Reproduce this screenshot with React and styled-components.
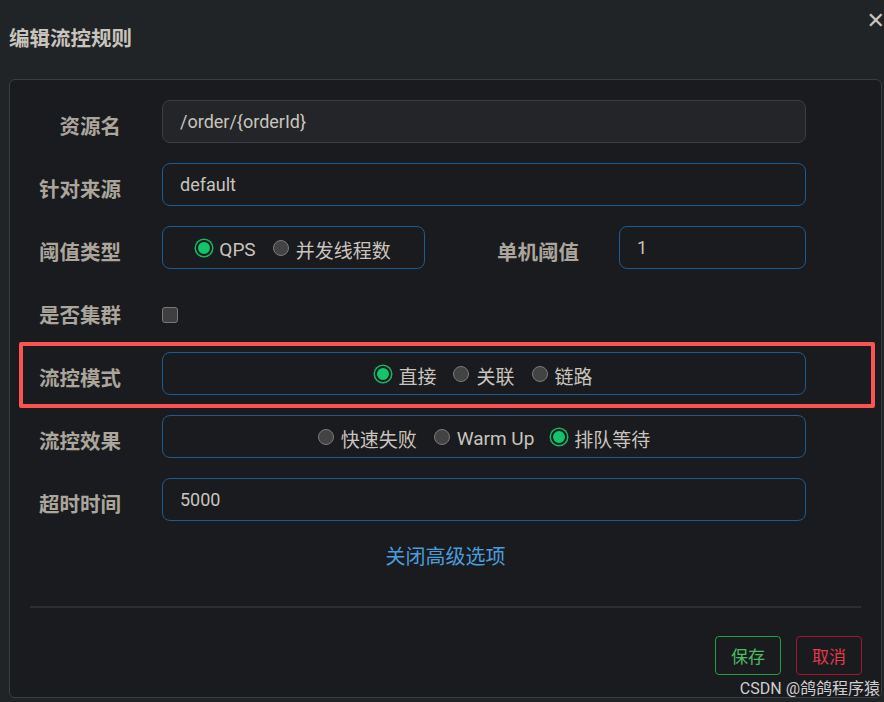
import React from 'react'
import styled, { createGlobalStyle } from 'styled-components'

const GlobalStyle = createGlobalStyle`
  html, body {
    margin: 0;
    padding: 0;
    background: #212427;
  }
  body {
    font-family: Roboto, "Noto Sans CJK SC", sans-serif;
  }
`

const Page = styled.div`
  position: relative;
  width: 884px;
  height: 702px;
  overflow: hidden;
  background: #212427;
`

const Header = styled.div`
  display: flex;
  justify-content: space-between;
  align-items: flex-start;
  height: 79px;
  padding-left: 9px;
  box-sizing: border-box;
`

const Title = styled.h4`
  margin: 24px 0 0;
  font-family: "Noto Sans CJK SC", sans-serif;
  font-size: 20.5px;
  line-height: 26px;
  font-weight: 700;
  color: #c9c4bd;
`

const Close = styled.span`
  margin: 9px -1px 0 0;
  font-family: "DejaVu Sans", sans-serif;
  font-size: 22px;
  line-height: 24px;
  font-weight: 700;
  color: #c9c4bd;
`

const Panel = styled.div`
  margin: 0 2px 0 9px;
  border: 1px solid #3a3d41;
  border-radius: 6px;
  background: #1a1b1e;
  padding: 20px 0 22px;
`

const Form = styled.div`
  display: flex;
  flex-direction: column;
  gap: 20px;
`

const Row = styled.div`
  position: relative;
  display: grid;
  grid-template-columns: 111px 644px;
  column-gap: 41px;
  align-items: center;
  height: 43px;
`

const Label = styled.label`
  padding-top: 7px;
  text-align: right;
  font-family: "Noto Sans CJK SC", sans-serif;
  font-size: 20.5px;
  font-weight: 700;
  color: #aba59c;
  white-space: nowrap;
`

const Field = styled.div`
  box-sizing: border-box;
  height: 43px;
  display: flex;
  align-items: center;
  padding-left: 17px;
  border: 1px solid ${p => (p.$disabled ? '#3b3e42' : '#1d5a8f')};
  background: ${p => (p.$disabled ? '#232528' : 'transparent')};
  border-radius: 8px;
  font-size: 18px;
  color: #c9c4bd;
  width: ${p => p.$width || 'auto'};
`

const Split = styled.div`
  display: flex;
  align-items: center;
`

const SubLabel = styled(Label)`
  flex: 1;
  margin-right: 40px;
`

const RadioGroup = styled.div`
  box-sizing: border-box;
  height: 43px;
  width: ${p => p.$width || 'auto'};
  display: flex;
  align-items: center;
  justify-content: center;
  gap: 17px;
  border: 1px solid #1d5a8f;
  border-radius: 8px;
  padding-top: 4px;
`

const RadioItem = styled.span`
  display: flex;
  align-items: center;
  gap: 7px;
  font-size: 19px;
  color: #c9c4bd;
`

const Dot = styled.span`
  box-sizing: border-box;
  width: 16px;
  height: 16px;
  border-radius: 50%;
  flex: none;
  margin-top: -3px;
  background: ${p => (p.$checked ? '#13c46b' : '#434343')};
  border: ${p => (p.$checked ? '2px solid #1a1b1e' : '1.5px solid #7b7b7b')};
  box-shadow: ${p => (p.$checked ? '0 0 0 1.5px #13b864' : 'none')};
`

const Checkbox = styled.span`
  box-sizing: border-box;
  display: block;
  width: 16px;
  height: 16px;
  margin-top: 8px;
  border-radius: 3px;
  background: #3f3f40;
  border: 1.5px solid #797979;
`

const Highlight = styled.div`
  position: absolute;
  left: 9px;
  right: 6px;
  top: -10px;
  bottom: -13px;
  border: 4px solid #fb5252;
  border-radius: 2px;
  pointer-events: none;
`

const ToggleLink = styled.a`
  display: block;
  margin-top: 23px;
  text-align: center;
  font-size: 20px;
  line-height: 26px;
  color: #4a9ddb;
  text-decoration: none;
  cursor: pointer;
`

const Divider = styled.hr`
  margin: 36px 20px 0;
  border: none;
  height: 2px;
  background: #2c2e31;
`

const Footer = styled.div`
  display: flex;
  justify-content: flex-end;
  gap: 15px;
  padding-right: 19px;
  margin-top: 28px;
`

const Button = styled.button`
  width: 66px;
  height: 39px;
  border-radius: 4px;
  background: transparent;
  border: 1px solid ${p => (p.$tone === 'danger' ? '#9e1b2b' : '#21a03d')};
  color: ${p => (p.$tone === 'danger' ? '#e2394b' : '#4cbb62')};
  font-family: "Noto Sans CJK SC", sans-serif;
  font-size: 17px;
  cursor: pointer;
`

const Watermark = styled.span`
  position: absolute;
  right: 4px;
  bottom: 3px;
  font-size: 16px;
  line-height: 20px;
  color: #cfcfcf;
`

const Radio = ({ checked, children }) => (
  <RadioItem>
    <Dot $checked={checked} />
    {children}
  </RadioItem>
)

const App = () => (
  <Page>
    <GlobalStyle />
    <Header>
      <Title>编辑流控规则</Title>
      <Close>✕</Close>
    </Header>

    <Panel>
      <Form>
        <Row>
          <Label>资源名</Label>
          <Field $disabled>/order/{'{orderId}'}</Field>
        </Row>

        <Row>
          <Label>针对来源</Label>
          <Field>default</Field>
        </Row>

        <Row>
          <Label>阈值类型</Label>
          <Split>
            <RadioGroup $width="263px">
              <Radio checked>QPS</Radio>
              <Radio>并发线程数</Radio>
            </RadioGroup>
            <SubLabel>单机阈值</SubLabel>
            <Field $width="187px">1</Field>
          </Split>
        </Row>

        <Row>
          <Label>是否集群</Label>
          <Checkbox />
        </Row>

        <Row>
          <Label>流控模式</Label>
          <RadioGroup>
            <Radio checked>直接</Radio>
            <Radio>关联</Radio>
            <Radio>链路</Radio>
          </RadioGroup>
          <Highlight />
        </Row>

        <Row>
          <Label>流控效果</Label>
          <RadioGroup>
            <Radio>快速失败</Radio>
            <Radio>Warm Up</Radio>
            <Radio checked>排队等待</Radio>
          </RadioGroup>
        </Row>

        <Row>
          <Label>超时时间</Label>
          <Field>5000</Field>
        </Row>
      </Form>

      <ToggleLink>关闭高级选项</ToggleLink>
      <Divider />

      <Footer>
        <Button>保存</Button>
        <Button $tone="danger">取消</Button>
      </Footer>
    </Panel>

    <Watermark>CSDN @鸽鸽程序猿</Watermark>
  </Page>
)

export default App
